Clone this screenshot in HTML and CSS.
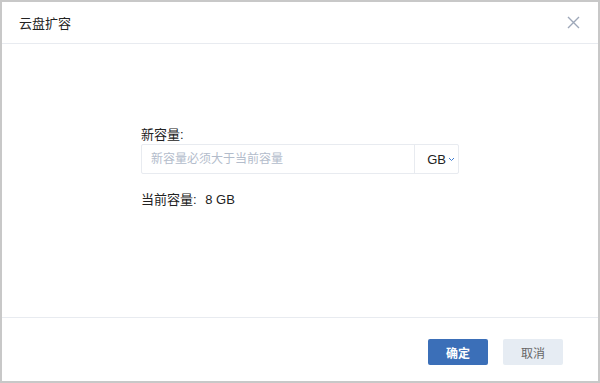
FILE: index.html
```html
<!DOCTYPE html>
<html lang="zh-CN">
<head>
    <meta charset="UTF-8" />
    <title>云盘扩容</title>
    <link rel="stylesheet" href="styles.css">
</head>
<body>
    <div class="dialog">
        <div class="dialog-header">
            <span class="dialog-title">云盘扩容</span>
            <button class="close-btn" aria-label="关闭">
                <svg width="13" height="13" viewBox="0 0 13 13">
                    <path d="M1 1 L12 12 M12 1 L1 12" stroke="#9ea8b9" stroke-width="1.4" fill="none" />
                </svg>
            </button>
        </div>
        <div class="dialog-body">
            <div class="form">
                <label class="field-label">新容量:</label>
                <div class="input-group">
                    <input class="size-input" type="text" placeholder="新容量必须大于当前容量" />
                    <div class="unit-select">
                        <span>GB</span>
                        <svg width="7" height="5" viewBox="0 0 7 5">
                            <path d="M1 1 L3.5 3.5 L6 1" stroke="#3d7bd0" stroke-width="1" fill="none" />
                        </svg>
                    </div>
                </div>
                <div class="current">
                    <span class="current-label">当前容量:</span>
                    <span class="current-value">8 GB</span>
                </div>
            </div>
        </div>
        <div class="dialog-footer">
            <button class="btn btn-primary">确定</button>
            <button class="btn btn-default">取消</button>
        </div>
    </div>
</body>
</html>
```

FILE: styles.css
```css
:root {
    --border-outer: #c8c8c8;
    --divider: #e8ebf0;
    --text: #222;
    --placeholder: #b3bccb;
    --primary: #3b6fb8;
    --cancel-bg: #e6ecf3;
    --font-family: "Liberation Sans", "Noto Sans CJK SC", sans-serif;
}

html, body {
    margin: 0;
    padding: 0;
    background: #fff;
    font-family: var(--font-family);
    color: var(--text);
}

.dialog {
    width: 600px;
    height: 383px;
    box-sizing: border-box;
    border: 2px solid var(--border-outer);
    display: flex;
    flex-direction: column;
    background: #fff;
}

.dialog-header {
    height: 41px;
    border-bottom: 1px solid var(--divider);
    display: flex;
    align-items: center;
    justify-content: space-between;
    padding: 0 18px 0 17px;
    flex-shrink: 0;
}

.dialog-title {
    font-size: 13px;
    color: #222;
}

.close-btn {
    border: none;
    background: transparent;
    padding: 0;
    display: flex;
    cursor: pointer;
}

.dialog-body {
    flex: 1;
    display: flex;
    justify-content: center;
    padding-top: 82px;
}

.form {
    width: 318px;
}

.field-label {
    display: block;
    font-size: 13px;
    line-height: 18px;
}

.input-group {
    display: flex;
    height: 30px;
    box-sizing: border-box;
    border: 1px solid var(--divider);
    border-radius: 2px;
}

.size-input {
    flex: 1;
    border: none;
    outline: none;
    padding: 0 9px;
    font-family: var(--font-family);
    font-size: 12px;
    color: var(--text);
    background: transparent;
}

.size-input::placeholder {
    color: var(--placeholder);
}

.unit-select {
    width: 44px;
    border-left: 1px solid var(--divider);
    display: flex;
    align-items: center;
    justify-content: flex-end;
    gap: 2px;
    padding-right: 3px;
    box-sizing: border-box;
    font-size: 13px;
}

.current {
    margin-top: 17px;
    font-size: 13px;
    line-height: 18px;
}

.current-value {
    margin-left: 5px;
}

.dialog-footer {
    height: 64px;
    border-top: 1px solid var(--divider);
    display: flex;
    justify-content: flex-end;
    align-items: flex-start;
    gap: 15px;
    padding: 21px 35px 0 0;
    box-sizing: border-box;
    flex-shrink: 0;
}

.btn {
    width: 60px;
    height: 26px;
    border: none;
    border-radius: 2px;
    font-family: var(--font-family);
    font-size: 12px;
    cursor: pointer;
}

.btn-primary {
    background: var(--primary);
    color: #fff;
    font-weight: 700;
}

.btn-default {
    background: var(--cancel-bg);
    color: #666;
}
```
